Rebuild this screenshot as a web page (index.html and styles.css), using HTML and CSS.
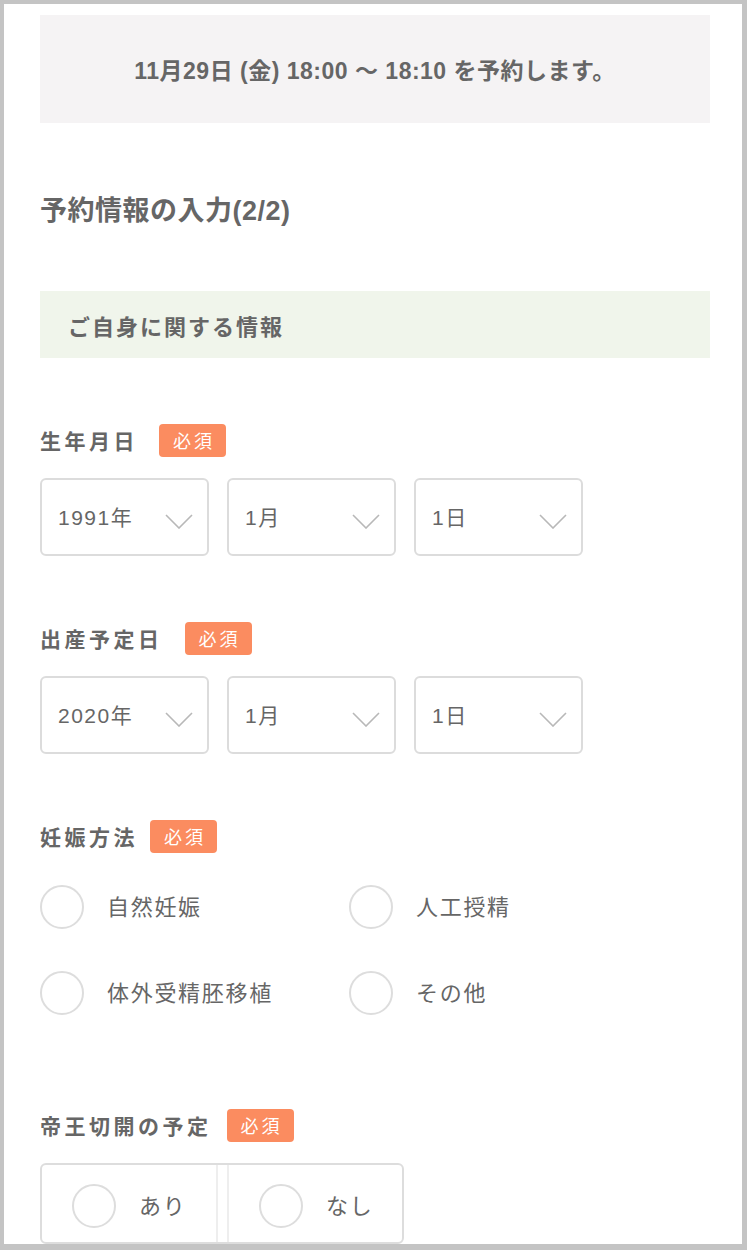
FILE: index.html
```html
<!DOCTYPE html>
<html lang="ja">
<head>
<meta charset="utf-8">
<title>予約情報の入力</title>
<link rel="stylesheet" href="styles.css">
</head>
<body>
<div class="frame">
  <div class="summary">11月29日 (金) 18:00 〜 18:10 を予約します。</div>
  <h1 class="title">予約情報の入力(2/2)</h1>
  <div class="section-head">ご自身に関する情報</div>

  <div class="field field-birth">
    <div class="label-row">
      <span class="label">生年月日</span><span class="badge badge-birth">必須</span>
    </div>
    <div class="selects">
      <div class="select"><span class="select-text">1991年</span><svg class="chev" width="28" height="15" viewBox="0 0 28 15"><polyline points="1,1 14,14 27,1" fill="none" stroke="#b8b8b8" stroke-width="1.6"/></svg></div>
      <div class="select"><span class="select-text">1月</span><svg class="chev" width="28" height="15" viewBox="0 0 28 15"><polyline points="1,1 14,14 27,1" fill="none" stroke="#b8b8b8" stroke-width="1.6"/></svg></div>
      <div class="select"><span class="select-text">1日</span><svg class="chev" width="28" height="15" viewBox="0 0 28 15"><polyline points="1,1 14,14 27,1" fill="none" stroke="#b8b8b8" stroke-width="1.6"/></svg></div>
    </div>
  </div>

  <div class="field field-due">
    <div class="label-row">
      <span class="label">出産予定日</span><span class="badge badge-due">必須</span>
    </div>
    <div class="selects">
      <div class="select"><span class="select-text">2020年</span><svg class="chev" width="28" height="15" viewBox="0 0 28 15"><polyline points="1,1 14,14 27,1" fill="none" stroke="#b8b8b8" stroke-width="1.6"/></svg></div>
      <div class="select"><span class="select-text">1月</span><svg class="chev" width="28" height="15" viewBox="0 0 28 15"><polyline points="1,1 14,14 27,1" fill="none" stroke="#b8b8b8" stroke-width="1.6"/></svg></div>
      <div class="select"><span class="select-text">1日</span><svg class="chev" width="28" height="15" viewBox="0 0 28 15"><polyline points="1,1 14,14 27,1" fill="none" stroke="#b8b8b8" stroke-width="1.6"/></svg></div>
    </div>
  </div>

  <div class="field field-method">
    <div class="label-row">
      <span class="label">妊娠方法</span><span class="badge badge-method">必須</span>
    </div>
    <div class="radios">
      <div class="radio"><span class="circle"></span><span class="radio-text">自然妊娠</span></div>
      <div class="radio"><span class="circle"></span><span class="radio-text">人工授精</span></div>
      <div class="radio"><span class="circle"></span><span class="radio-text">体外受精胚移植</span></div>
      <div class="radio"><span class="circle"></span><span class="radio-text">その他</span></div>
    </div>
  </div>

  <div class="field field-cs">
    <div class="label-row">
      <span class="label">帝王切開の予定</span><span class="badge badge-cs">必須</span>
    </div>
    <div class="toggle">
      <div class="toggle-cell cell-yes"><span class="circle"></span><span class="radio-text">あり</span></div>
      <div class="toggle-cell cell-no"><span class="circle"></span><span class="radio-text">なし</span></div>
    </div>
  </div>
</div>
</body>
</html>
```

FILE: styles.css
```css
html, body {
  margin: 0;
  padding: 0;
}
body {
  background: #c4c4c4;
  height: 1250px;
  overflow: hidden;
  font-family: "Liberation Sans", "Noto Sans CJK JP", sans-serif;
  color: #666666;
}
.frame {
  margin: 4px 5px 0 4px;
  height: 1240px;
  background: #ffffff;
  padding: 0 32px 0 36px;
  overflow: hidden;
}
.summary {
  margin-top: 11px;
  height: 108px;
  background: #f5f3f4;
  display: flex;
  align-items: center;
  justify-content: center;
  font-size: 23px;
  font-weight: bold;
  letter-spacing: 0.5px;
}
.title {
  margin: 68px 0 0 0;
  height: 40px;
  line-height: 40px;
  font-size: 27px;
  font-weight: bold;
  letter-spacing: 0.5px;
}
.section-head {
  margin-top: 60px;
  height: 67px;
  background: #f0f5eb;
  display: flex;
  align-items: center;
  padding-left: 28px;
  font-size: 22px;
  font-weight: bold;
  letter-spacing: 2px;
}
.field-birth { margin-top: 65px; }
.field-due { margin-top: 65px; }
.field-method { margin-top: 65px; }
.field-cs { margin-top: 93px; }
.label-row {
  display: flex;
  align-items: center;
  height: 34px;
}
.label {
  font-size: 21px;
  font-weight: bold;
  letter-spacing: 3.5px;
}
.badge {
  height: 33px;
  width: 67px;
  box-sizing: border-box;
  border-radius: 4px;
  background: #fb8c60;
  color: #ffffff;
  font-size: 18px;
  letter-spacing: 3px;
  display: flex;
  align-items: center;
  justify-content: center;
  padding-left: 3px;
}
.badge-birth { margin-left: 21px; }
.badge-due { margin-left: 22px; }
.badge-method { margin-left: 12px; }
.badge-cs { margin-left: 15px; }
.selects {
  margin-top: 21px;
  display: flex;
  gap: 18px;
}
.select {
  width: 169px;
  height: 78px;
  box-sizing: border-box;
  border: 2px solid #dcdcdc;
  border-radius: 6px;
  display: flex;
  align-items: center;
  justify-content: space-between;
  padding: 0 14px 0 16px;
}
.select-text {
  font-size: 21px;
  letter-spacing: 1.5px;
  margin-top: -3px;
}
.chev {
  margin-top: 8px;
}
.radios {
  margin-top: 32px;
  display: grid;
  grid-template-columns: 309px 1fr;
  row-gap: 42px;
}
.radio {
  display: flex;
  align-items: center;
  gap: 23px;
}
.circle {
  width: 44px;
  height: 44px;
  box-sizing: border-box;
  border: 2px solid #dddddd;
  border-radius: 50%;
  flex: none;
}
.radio-text {
  font-size: 22px;
  letter-spacing: 1.7px;
  margin-top: -4px;
}
.toggle {
  margin-top: 21px;
  width: 364px;
  height: 81px;
  box-sizing: border-box;
  border: 2px solid #dddddd;
  border-radius: 6px;
  display: flex;
}
.toggle-cell {
  display: flex;
  align-items: center;
  gap: 23px;
  padding: 5px 0 0 30px;
  box-sizing: border-box;
}
.cell-yes {
  width: 176px;
  border-right: 2px solid #eeeeee;
}
.cell-no {
  flex: 1;
  margin-left: 9px;
  border-left: 2px solid #eeeeee;
}
```
